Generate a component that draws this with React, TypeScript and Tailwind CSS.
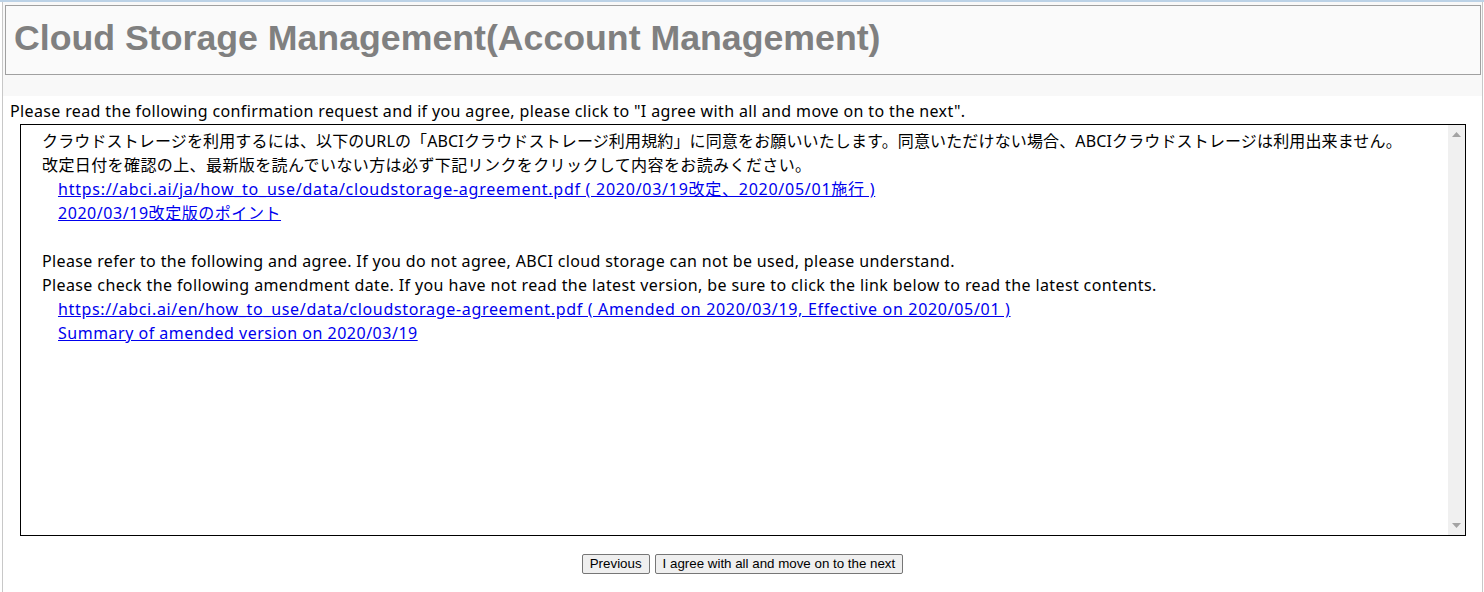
export default function App() {
  const body = '"Noto Sans", "Noto Sans CJK JP", sans-serif';
  return (
    <div className="min-h-[592px] w-[1484px] bg-white">
      <div className="h-[2px] bg-[#bcd2e6]" />
      <div className="ml-[2px] mr-[1px] min-h-[590px] border-x border-[#c8c8c8]">
        {/* header */}
        <div className="bg-[#f8f8f8] pl-[2px] pr-[1px] pt-[3px] pb-[21px]">
          <div className="h-[70px] border border-[#a0a0a0] bg-[#fafafa] pl-[8px] pt-[11px]">
            <h1
              className="text-[35.7px] font-bold leading-[42px] text-[#808080]"
              style={{ fontFamily: '"Liberation Sans", Arial, sans-serif' }}
            >
              Cloud Storage Management(Account Management)
            </h1>
          </div>
        </div>

        {/* body */}
        <div className="px-[7px] text-[16px] text-black" style={{ fontFamily: body }}>
          <p className="pt-[4px] leading-[22px] tracking-[0.36px]">
            Please read the following confirmation request and if you agree, please click to "I agree with all and move on to the next".
          </p>
          <div className="mt-[2px] ml-[10px] mr-[9px] flex h-[412px] border border-black">
            <div className="flex-1 pl-[21px] pt-[4px] leading-[24px]">
              <div className="tracking-[0.14px]">
                クラウドストレージを利用するには、以下のURLの「ABCIクラウドストレージ利用規約」に同意をお願いいたします。同意いただけない場合、ABCIクラウドストレージは利用出来ません。
              </div>
              <div className="tracking-[0.4px]">
                改定日付を確認の上、最新版を読んでいない方は必ず下記リンクをクリックして内容をお読みください。
              </div>
              <div className="pl-[16px]">
                <a href="#" className="tracking-[0.74px] text-[#0000ee] underline">
                  https://abci.ai/ja/how_to_use/data/cloudstorage-agreement.pdf ( 2020/03/19改定、2020/05/01施行 )
                </a>
              </div>
              <div className="pl-[16px]">
                <a href="#" className="tracking-[0.55px] text-[#0000ee] underline">
                  2020/03/19改定版のポイント
                </a>
              </div>
              <div className="h-[24px]" />
              <div className="tracking-[0.36px]">
                Please refer to the following and agree. If you do not agree, ABCI cloud storage can not be used, please understand.
              </div>
              <div className="tracking-[0.38px]">
                Please check the following amendment date. If you have not read the latest version, be sure to click the link below to read the latest contents.
              </div>
              <div className="pl-[16px]">
                <a href="#" className="tracking-[0.68px] text-[#0000ee] underline">
                  https://abci.ai/en/how_to_use/data/cloudstorage-agreement.pdf ( Amended on 2020/03/19, Effective on 2020/05/01 )
                </a>
              </div>
              <div className="pl-[16px]">
                <a href="#" className="tracking-[0.5px] text-[#0000ee] underline">
                  Summary of amended version on 2020/03/19
                </a>
              </div>
            </div>
            {/* scrollbar */}
            <div className="flex w-[17px] flex-col items-center justify-between bg-[#f0f0f0] py-[7px]">
              <svg width="9" height="5" viewBox="0 0 9 5">
                <path d="M4.5 0 L9 5 L0 5 Z" fill="#a3a3a3" />
              </svg>
              <svg width="9" height="5" viewBox="0 0 9 5">
                <path d="M0 0 L9 0 L4.5 5 Z" fill="#a3a3a3" />
              </svg>
            </div>
          </div>
          <div
            className="mt-[18px] flex justify-center gap-[5px] text-[13.33px]"
            style={{ fontFamily: '"Liberation Sans", Arial, sans-serif' }}
          >
            <button className="h-[20px] rounded-[2px] border border-[#767676] bg-[#efefef] px-[7px] leading-[16px] text-black">
              Previous
            </button>
            <button className="h-[20px] rounded-[2px] border border-[#767676] bg-[#efefef] px-[7px] leading-[16px] text-black">
              I agree with all and move on to the next
            </button>
          </div>
        </div>
      </div>
    </div>
  );
}
